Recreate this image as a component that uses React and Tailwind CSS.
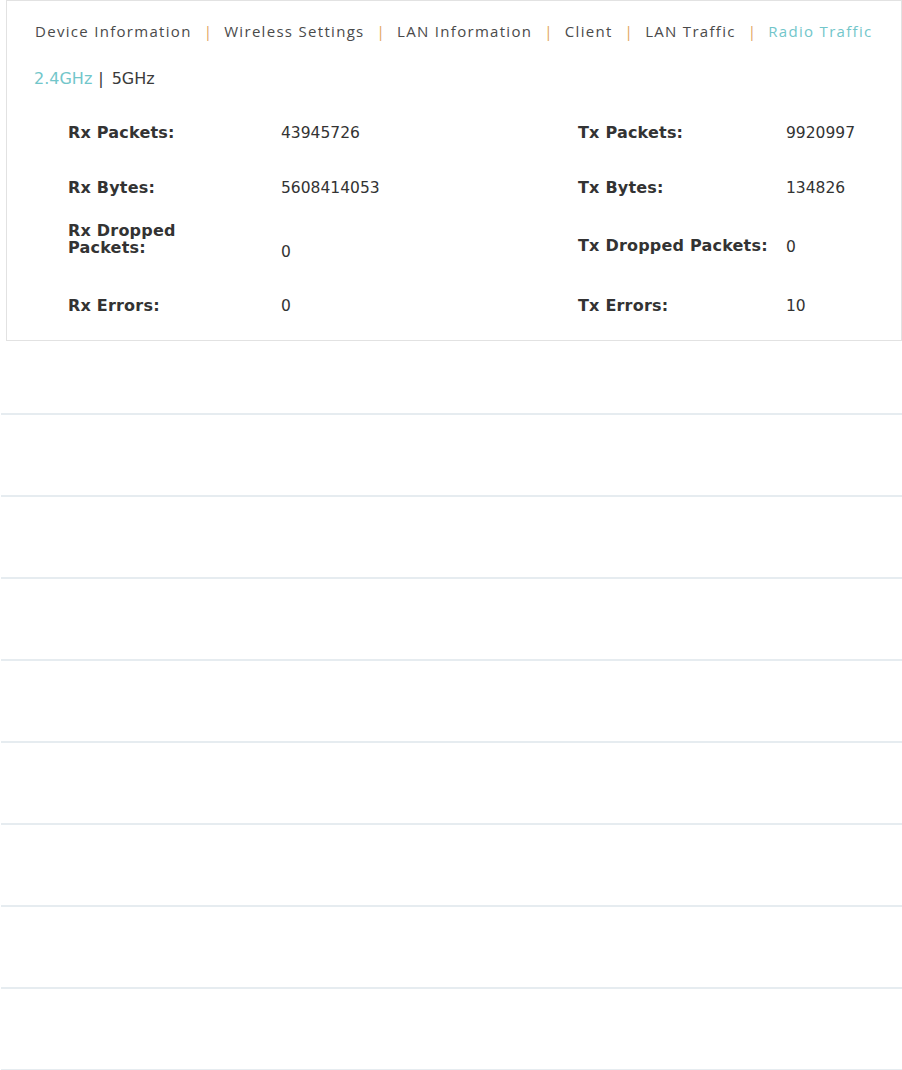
import React from "react";

const tabs = [
  "Device Information",
  "Wireless Settings",
  "LAN Information",
  "Client",
  "LAN Traffic",
  "Radio Traffic",
];

// row height + top offsets of each cell (label, value, label, value)
const rows = [
  { l: "Rx Packets:", lv: "43945726", r: "Tx Packets:", rv: "9920997", h: "h-[55px]", p: ["pt-0", "pt-px", "pt-0", "pt-px"] },
  { l: "Rx Bytes:", lv: "5608414053", r: "Tx Bytes:", rv: "134826", h: "h-[43px]", p: ["pt-0", "pt-px", "pt-0", "pt-px"] },
  { l: "Rx Dropped Packets:", lv: "0", r: "Tx Dropped Packets:", rv: "0", h: "h-[74px]", p: ["pt-0", "pt-[22px]", "pt-[15px]", "pt-[17px]"] },
  { l: "Rx Errors:", lv: "0", r: "Tx Errors:", rv: "10", h: "h-[44px]", p: ["pt-px", "pt-[2px]", "pt-px", "pt-[2px]"] },
];

const App = () => {
  return (
    <div className="w-[902px] h-[1070px] bg-white overflow-hidden">
      {/* Panel */}
      <div className="ml-[6px] w-[896px] h-[341px] border border-[#e2e2e2]">
        <div className="flex items-center h-[60px] pl-[28px] font-['Open_Sans',sans-serif] text-[15px] tracking-[1.3px] text-[#4a4a4a]">
          {tabs.map((t, i) => (
            <React.Fragment key={t}>
              {i > 0 && <span className="pl-[12px] pr-[11px] text-[#dfa35b]">|</span>}
              <span className={i === tabs.length - 1 ? "text-[#72c6ca]" : ""}>{t}</span>
            </React.Fragment>
          ))}
        </div>
        <div className="flex items-center h-[36px] pl-[27px] font-['DejaVu_Sans',sans-serif] text-[16px] text-[#3a3a3a]">
          <span className="text-[#72c6ca]">2.4GHz</span>
          <span className="pl-[6px] pr-[8px]">|</span>
          <span>5GHz</span>
        </div>
        <div className="pt-[27px] font-['DejaVu_Sans',sans-serif] text-[#333] leading-[17px]">
          {rows.map((r) => (
            <div key={r.l} className={`flex ${r.h}`}>
              <div className={`w-[274px] pl-[61px] font-bold text-[16px] tracking-[0.2px] ${r.p[0]}`}>
                <div className="w-[130px]">{r.l}</div>
              </div>
              <div className={`w-[297px] text-[15.5px] ${r.p[1]}`}>{r.lv}</div>
              <div className={`w-[208px] font-bold text-[16px] tracking-[0.2px] ${r.p[2]}`}>{r.r}</div>
              <div className={`text-[15.5px] ${r.p[3]}`}>{r.rv}</div>
            </div>
          ))}
        </div>
      </div>

      {/* Empty list rows */}
      <div className="mt-[72px]">
        {Array.from({ length: 8 }).map((_, i) => (
          <div key={i} className="h-[82px] border-t-2 border-[#e6ecf0] ml-[1px]" />
        ))}
        <div className="border-t-2 border-[#e6ecf0] ml-[1px]" />
      </div>
    </div>
  );
};

export default App;
